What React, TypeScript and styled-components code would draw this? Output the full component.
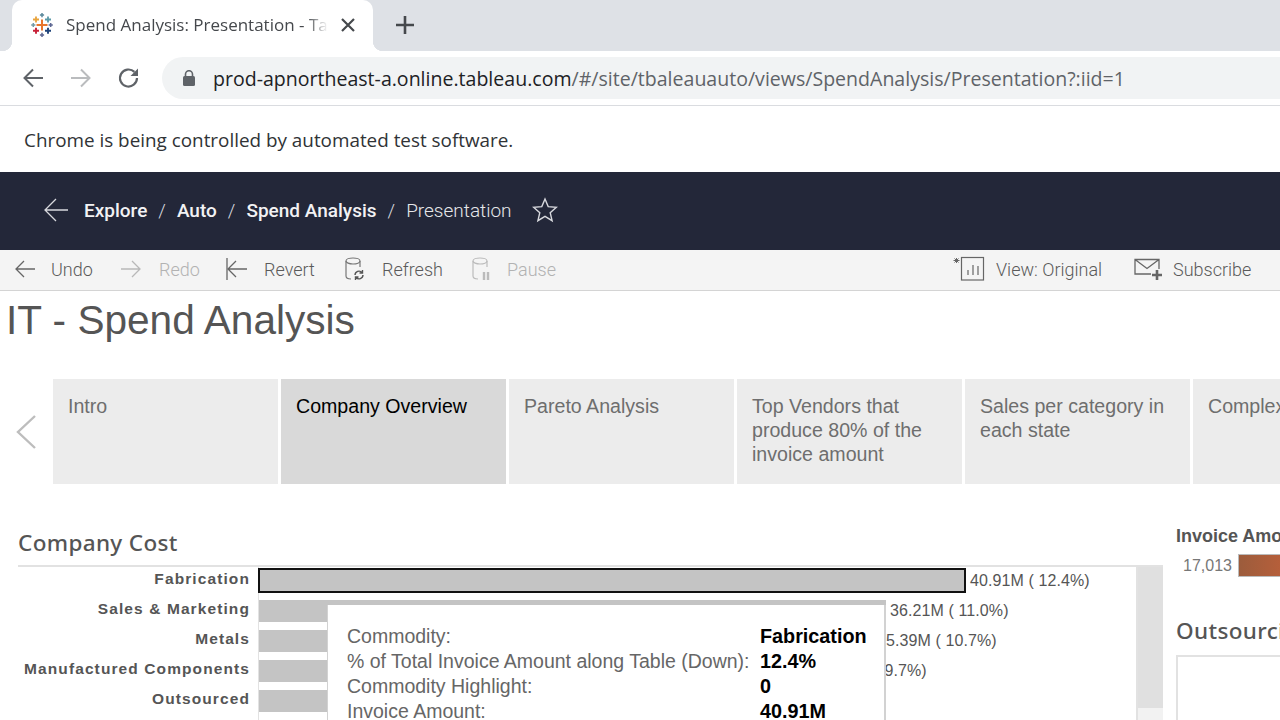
import React, { FC } from 'react'
import styled, { createGlobalStyle } from 'styled-components'

const Global = createGlobalStyle`
  html, body {
    margin: 0;
    padding: 0;
    width: 1280px;
    height: 720px;
    overflow: hidden;
    background: #fff;
  }
  * { box-sizing: border-box; }
`

const Page = styled.div`
  width: 1280px;
  height: 720px;
  overflow: hidden;
  display: flex;
  flex-direction: column;
`

const TabStrip = styled.div`
  height: 51px;
  flex: none;
  background: #dee1e6;
  display: flex;
  align-items: flex-end;
  padding-left: 12px;
`

const Tab = styled.div`
  position: relative;
  width: 361px;
  height: 51px;
  background: #fff;
  border-radius: 10px 10px 0 0;
  display: flex;
  align-items: center;
  padding: 0 16px 2px 18px;

  &:before,
  &:after {
    content: '';
    position: absolute;
    bottom: 0;
    width: 10px;
    height: 10px;
  }

  &:before {
    left: -10px;
    background: radial-gradient(circle at 0 0, #dee1e6 10px, #fff 10.5px);
  }

  &:after {
    right: -10px;
    background: radial-gradient(circle at 100% 0, #dee1e6 10px, #fff 10.5px);
  }
`

const TabTitle = styled.div`
  width: 262px;
  margin-left: 12px;
  font: 17px 'Open Sans', sans-serif;
  color: #45484c;
  white-space: nowrap;
  overflow: hidden;
  -webkit-mask-image: linear-gradient(90deg, #000 92%, transparent);
  mask-image: linear-gradient(90deg, #000 92%, transparent);
`

const TabClose = styled.div`
  margin-left: 13px;
  display: flex;
`

const NewTab = styled.div`
  margin-left: 22px;
  height: 51px;
  padding-bottom: 2px;
  display: flex;
  align-items: center;
`

const AddressRow = styled.div`
  height: 55px;
  flex: none;
  background: #fff;
  border-bottom: 1px solid #dadce0;
  display: flex;
  align-items: center;
  padding-left: 21px;
  gap: 24px;
`

const NavIcon = styled.div`
  width: 24px;
  height: 24px;
  display: flex;
`

const Omnibox = styled.div`
  flex: 1;
  height: 42px;
  margin-left: -3px;
  margin-right: -40px;
  background: #f1f3f4;
  border-radius: 21px;
  display: flex;
  align-items: center;
  padding-left: 20px;
  gap: 17px;
  font: 19.56px 'Open Sans', sans-serif;
  color: #202124;
  white-space: nowrap;
`

const UrlPath = styled.span`
  color: #5f6368;
`

const InfoBar = styled.div`
  height: 66px;
  flex: none;
  background: #fff;
  display: flex;
  align-items: center;
  padding: 2px 0 0 24px;
  font: 18.88px 'Open Sans', sans-serif;
  color: #303336;
`

const NavBar = styled.div`
  height: 78px;
  flex: none;
  background: #232739;
  display: flex;
  align-items: center;
  padding: 0 0 2px 43px;
  color: #fff;
  font: 19px Roboto, sans-serif;
`

const Crumb = styled.span<{ $current?: boolean }>`
  font-weight: ${p => (p.$current ? 300 : 500)};
  color: ${p => (p.$current ? '#e6e7ea' : '#f2f2f4')};
`

const CrumbSep = styled.span`
  margin: 0 11px;
  font-weight: 300;
  color: #d8d9de;
`

const BackLink = styled.div`
  display: flex;
  margin-right: 15px;
`

const StarLink = styled.div`
  display: flex;
  margin-left: 20px;
`

const Toolbar = styled.div`
  height: 41px;
  flex: none;
  background: #f4f4f4;
  border-bottom: 1px solid #d4d4d4;
  display: flex;
  align-items: center;
  padding: 0 0 2px 14px;
`

const ToolButton = styled.div<{ $off?: boolean; $w: number }>`
  width: ${p => p.$w}px;
  flex: none;
  display: flex;
  align-items: center;
  font: 300 18px Roboto, sans-serif;
  color: ${p => (p.$off ? '#b2b2b2' : '#5a5a5a')};
  white-space: nowrap;
`

const ToolIcon = styled.div<{ $w: number }>`
  width: ${p => p.$w}px;
  display: flex;
  flex: none;
`

const ToolSpacer = styled.div`
  flex: 1;
`

const Content = styled.div`
  flex: 1;
  min-height: 0;
  position: relative;
  background: #fff;
`

const Title = styled.h1`
  margin: 0;
  padding: 6px 0 0 6px;
  height: 88px;
  font: 40.6px 'Liberation Sans', Arial, sans-serif;
  color: #555;
`

const TabsRow = styled.div`
  height: 105px;
  display: flex;
`

const Chevron = styled.div`
  width: 53px;
  flex: none;
  display: flex;
  align-items: center;
  padding-left: 15px;
`

const StoryPoint = styled.div<{ $active?: boolean }>`
  width: 225px;
  flex: none;
  margin-right: 3px;
  padding: 15px 15px 0;
  background: ${p => (p.$active ? '#d9d9d9' : '#ececec')};
  color: ${p => (p.$active ? '#000' : '#6e6e6e')};
  font: 19.6px/24px 'Liberation Sans', Arial, sans-serif;
  white-space: pre-line;
`

const Dash = styled.div`
  margin-top: 39px;
  display: flex;
`

const LeftPane = styled.div`
  width: 1176px;
  flex: none;
  padding-left: 18px;
`

const PaneTitle = styled.div`
  height: 42px;
  padding-top: 4px;
  font: 500 22.5px 'Noto Sans', sans-serif;
  letter-spacing: 0.35px;
  color: #555;
  white-space: nowrap;
`

const Chart = styled.div`
  display: flex;
  height: 200px;
  border-top: 2px solid #e2e2e2;
  width: 1145px;
`

const Labels = styled.div`
  width: 240px;
  flex: none;
`

const Label = styled.div`
  height: 30px;
  padding: 2px 8px 0 0;
  text-align: right;
  font: bold 15.5px/20px 'Liberation Sans', Arial, sans-serif;
  letter-spacing: 1.1px;
  color: #555;
  white-space: nowrap;
`

const Plot = styled.div`
  width: 880px;
  flex: none;
  border: solid #e2e2e2;
  border-width: 0 2px 0 1px;
`

const BarRow = styled.div`
  height: 30px;
  display: flex;
  align-items: flex-start;
  white-space: nowrap;
`

const Bar = styled.div<{ $selected?: boolean }>`
  height: ${p => (p.$selected ? 25 : 22)}px;
  background: #c4c4c4;
  border: ${p => (p.$selected ? '2px solid #111' : 'none')};
  margin-top: ${p => (p.$selected ? 1 : 3)}px;
  margin-left: ${p => (p.$selected ? -1 : 0)}px;
`

const BarValue = styled.div`
  margin-left: 4px;
  font: 16px/28px 'Liberation Sans', Arial, sans-serif;
  letter-spacing: 0.1px;
  color: #555;
`

const ScrollTrack = styled.div`
  width: 25px;
  flex: none;
  background: #f2f2f2;
`

const ScrollThumb = styled.div`
  height: 141px;
  background: #e0e0e0;
`

const RightPane = styled.div`
  flex: 1;
  overflow: hidden;
  margin-top: 2px;
`

const LegendTitle = styled.div`
  font: bold 18px/22px 'Liberation Sans', Arial, sans-serif;
  color: #555;
  white-space: nowrap;
`

const LegendRow = styled.div`
  margin-top: 7px;
  display: flex;
  align-items: center;
  padding-left: 7px;
  font: 16px 'Liberation Sans', Arial, sans-serif;
  color: #777;
`

const LegendRamp = styled.div`
  width: 60px;
  height: 23px;
  margin-left: 6px;
  flex: none;
  border: 1px solid #bbb;
  background: linear-gradient(90deg, #9c5c3c, #c0603a);
`

const RightTitle = styled.div`
  margin-top: 39px;
  font: 500 22.5px/30px 'Noto Sans', sans-serif;
  letter-spacing: 0.35px;
  color: #555;
  white-space: nowrap;
`

const RightBox = styled.div`
  margin-top: 9px;
  height: 120px;
  width: 200px;
  border: 2px solid #e2e2e2;
`

const Tooltip = styled.div`
  position: absolute;
  left: 327px;
  top: 314px;
  width: 559px;
  height: 140px;
  background: #fff;
  border: solid #d2d2d2;
  border-width: 0 2px 2px 1px;
  padding: 19px 0 0 19px;
`

const TipRow = styled.div`
  height: 25px;
  display: flex;
  font: 19.5px/25px 'Liberation Sans', Arial, sans-serif;
  color: #666;
  white-space: nowrap;
`

const TipKey = styled.div`
  width: 413px;
  flex: none;
`

const TipValue = styled.div`
  font-weight: bold;
  font-size: 19.8px;
  color: #000;
`

const TableauLogo: FC = () => (
  <svg width="24" height="24" viewBox="0 0 24 24" fill="none">
    <path d="M12 6.5v11M6.5 12h11" stroke="#e8762d" strokeWidth="2" />
    <path d="M6 3.5v6M3 6.5h6" stroke="#e8a33d" strokeWidth="1.8" />
    <path d="M18 3.5v6M15 6.5h6" stroke="#5b9aa8" strokeWidth="1.8" />
    <path d="M6 14.7v6M3 17.7h6" stroke="#c72037" strokeWidth="1.9" />
    <path d="M18 14.7v6M15 17.7h6" stroke="#1f447a" strokeWidth="1.9" />
    <path d="M12 0v4.2M9.9 2.1h4.2" stroke="#59879b" strokeWidth="1.5" />
    <path d="M12 19.8V24M9.9 21.9h4.2" stroke="#5c6692" strokeWidth="1.5" />
    <path d="M3.3 9.9v4.2M1.2 12h4.2" stroke="#7099a6" strokeWidth="1.5" />
    <path d="M20.7 9.9v4.2M18.6 12h4.2" stroke="#5c6692" strokeWidth="1.5" />
  </svg>
)

const ThinArrow: FC<{ color: string; flip?: boolean; bar?: boolean; size?: number }> = ({ color, flip, bar, size = 22 }) => (
  <svg width={size} height={size} viewBox="0 0 22 22" fill="none" stroke={color} strokeWidth="1.3" style={flip ? { transform: 'scaleX(-1)' } : undefined}>
    <path d="M2 11h19M10 3l-8 8 8 8" />
    {bar && <path d="M1 0v22" />}
  </svg>
)

const Database: FC<{ color: string; badge: 'refresh' | 'pause' }> = ({ color, badge }) => (
  <svg width="24" height="26" viewBox="0 0 24 26" fill="none" stroke={color} strokeWidth="1.2">
    <ellipse cx="9" cy="5" rx="7" ry="3" />
    <path d="M2 5v15c0 2 2 3 5 3M16 5v6" />
    {badge === 'refresh' ? (
      <path d="M11 19a4 4 0 0 1 7-2.5M19 19a4 4 0 0 1-7 2.5M18.5 14v3h-3M11.5 24v-3h3" stroke="#555" strokeWidth="1.4" />
    ) : (
      <path d="M13 16v8M17 16v8" strokeWidth="2.4" />
    )}
  </svg>
)

const Crumbs = ['Explore', 'Auto', 'Spend Analysis']
const Points = [
  'Intro',
  'Company Overview',
  'Pareto Analysis',
  'Top Vendors that\nproduce 80% of the\ninvoice amount',
  'Sales per category in\neach state',
  'Complex',
]
const Rows = [
  { label: 'Fabrication', width: 708, value: '40.91M ( 12.4%)', selected: true },
  { label: 'Sales & Marketing', width: 627, value: '36.21M ( 11.0%)' },
  { label: 'Metals', width: 614, value: '35.39M ( 10.7%)' },
  { label: 'Manufactured Components', width: 553, value: '31.99M ( 9.7%)' },
  { label: 'Outsourced', width: 500, value: '' },
]
const TipRows = [
  ['Commodity:', 'Fabrication'],
  ['% of Total Invoice Amount along Table (Down):', '12.4%'],
  ['Commodity Highlight:', '0'],
  ['Invoice Amount:', '40.91M'],
]

const App: FC = () => {
  return (
    <Page>
      <Global />
      <TabStrip>
        <Tab>
          <TableauLogo />
          <TabTitle>Spend Analysis: Presentation - Tableau Online</TabTitle>
          <TabClose>
            <svg width="14" height="14" viewBox="0 0 14 14" stroke="#45484c" strokeWidth="2.2">
              <path d="M1 1l12 12M13 1L1 13" />
            </svg>
          </TabClose>
        </Tab>
        <NewTab>
          <svg width="20" height="20" viewBox="0 0 20 20" stroke="#45484c" strokeWidth="2.6">
            <path d="M10 1v18M1 10h18" />
          </svg>
        </NewTab>
      </TabStrip>
      <AddressRow>
        <NavIcon>
          <svg width="24" height="24" viewBox="0 0 24 24" fill="none" stroke="#5f6368" strokeWidth="2">
            <path d="M22 12H3M12 3.5L3.5 12l8.5 8.5" />
          </svg>
        </NavIcon>
        <NavIcon>
          <svg width="24" height="24" viewBox="0 0 24 24" fill="none" stroke="#babcbe" strokeWidth="2">
            <path d="M2 12h19M12 3.5l8.5 8.5-8.5 8.5" />
          </svg>
        </NavIcon>
        <NavIcon>
          <svg width="24" height="24" viewBox="0 0 24 24" fill="none" stroke="#5f6368" strokeWidth="2.2">
            <path d="M20 12a8.5 8.5 0 1 1-2.6-6.1" />
            <path d="M21 2.5V10h-7.5z" fill="#5f6368" stroke="none" />
          </svg>
        </NavIcon>
        <Omnibox>
          <svg width="14" height="16" viewBox="0 0 14 16" fill="#5f6368">
            <rect x="1" y="6" width="12" height="10" rx="1.5" />
            <path d="M3.5 6V4.2a3.5 3.5 0 0 1 7 0V6" fill="none" stroke="#5f6368" strokeWidth="1.6" />
          </svg>
          <span>
            prod-apnortheast-a.online.tableau.com
            <UrlPath>/#/site/tbaleauauto/views/SpendAnalysis/Presentation?:iid=1</UrlPath>
          </span>
        </Omnibox>
      </AddressRow>
      <InfoBar>Chrome is being controlled by automated test software.</InfoBar>
      <NavBar>
        <BackLink>
          <svg width="26" height="26" viewBox="0 0 26 26" fill="none" stroke="#d8d9de" strokeWidth="1.3">
            <path d="M25 13H2M13 2L2 13l11 11" />
          </svg>
        </BackLink>
        {Crumbs.map(c => (
          <React.Fragment key={c}>
            <Crumb>{c}</Crumb>
            <CrumbSep>/</CrumbSep>
          </React.Fragment>
        ))}
        <Crumb $current>Presentation</Crumb>
        <StarLink>
          <svg width="26" height="26" viewBox="0 0 26 26" fill="none" stroke="#d8d9de" strokeWidth="1.4">
            <path d="M13 2l3.2 7.6 8.2.7-6.2 5.4 1.9 8L13 19.4l-7.1 4.3 1.9-8-6.2-5.4 8.2-.7z" />
          </svg>
        </StarLink>
      </NavBar>
      <Toolbar>
        <ToolButton $w={106}>
          <ToolIcon $w={37}><ThinArrow color="#666" /></ToolIcon>
          Undo
        </ToolButton>
        <ToolButton $w={106} $off>
          <ToolIcon $w={39}><ThinArrow color="#b8b8b8" flip /></ToolIcon>
          Redo
        </ToolButton>
        <ToolButton $w={118}>
          <ToolIcon $w={38}><ThinArrow color="#666" bar /></ToolIcon>
          Revert
        </ToolButton>
        <ToolButton $w={127}>
          <ToolIcon $w={38}><Database color="#777" badge="refresh" /></ToolIcon>
          Refresh
        </ToolButton>
        <ToolButton $w={100} $off>
          <ToolIcon $w={36}><Database color="#bbb" badge="pause" /></ToolIcon>
          Pause
        </ToolButton>
        <ToolSpacer />
        <ToolButton $w={182}>
          <ToolIcon $w={44}>
            <svg width="34" height="26" viewBox="0 0 34 26" fill="none" stroke="#666" strokeWidth="1.2">
              <path d="M1.5 4.5h6M4.5 2v5M2.5 2.5l4 4M6.5 2.5l-4 4" strokeWidth="1" />
              <rect x="9.5" y="1.5" width="22" height="22.5" />
              <path d="M16 19v-5M21 19V9M26 19V10" />
            </svg>
          </ToolIcon>
          View: Original
        </ToolButton>
        <ToolButton $w={146}>
          <ToolIcon $w={39}>
            <svg width="30" height="24" viewBox="0 0 30 24" fill="none" stroke="#666" strokeWidth="1.3">
              <path d="M17 17H1V2.5h24V12M1 2.5l12 9 12-9" />
              <path d="M23 13v10M18 18h10" strokeWidth="2.6" />
            </svg>
          </ToolIcon>
          Subscribe
        </ToolButton>
      </Toolbar>
      <Content>
        <Title>IT - Spend Analysis</Title>
        <TabsRow>
          <Chevron>
            <svg width="22" height="36" viewBox="0 0 22 36" fill="none" stroke="#bdbdbd" strokeWidth="2.4">
              <path d="M20 2L3 18l17 16" />
            </svg>
          </Chevron>
          {Points.map((p, i) => (
            <StoryPoint key={p} $active={i === 1}>{p}</StoryPoint>
          ))}
        </TabsRow>
        <Dash>
          <LeftPane>
            <PaneTitle>Company Cost</PaneTitle>
            <Chart>
              <Labels>
                {Rows.map(r => <Label key={r.label}>{r.label}</Label>)}
              </Labels>
              <Plot>
                {Rows.map(r => (
                  <BarRow key={r.label}>
                    <Bar $selected={r.selected} style={{ width: r.width }} />
                    <BarValue>{r.value}</BarValue>
                  </BarRow>
                ))}
              </Plot>
              <ScrollTrack>
                <ScrollThumb />
              </ScrollTrack>
            </Chart>
          </LeftPane>
          <RightPane>
            <LegendTitle>Invoice Amount</LegendTitle>
            <LegendRow>
              17,013
              <LegendRamp />
            </LegendRow>
            <RightTitle>Outsourcing</RightTitle>
            <RightBox />
          </RightPane>
        </Dash>
        <Tooltip>
          {TipRows.map(([k, v]) => (
            <TipRow key={k}>
              <TipKey>{k}</TipKey>
              <TipValue>{v}</TipValue>
            </TipRow>
          ))}
        </Tooltip>
      </Content>
    </Page>
  )
}

export default App
